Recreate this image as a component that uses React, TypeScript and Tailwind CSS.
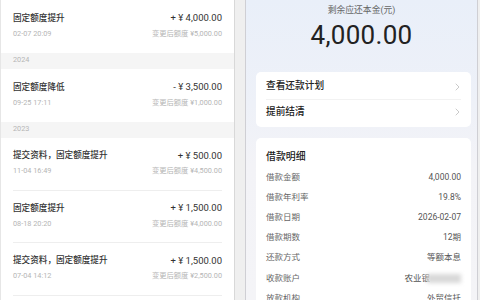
import React from "react";

const FONT = { fontFamily: "Roboto, 'Noto Sans CJK SC', sans-serif" };

type Rec = { title: string; amount: string; time: string; after: string };

function Row({ r, divider }: { r: Rec; divider?: boolean }) {
  return (
    <div className="px-[12px] shrink-0">
      <div className={`h-[52.5px] flex flex-col justify-center ${divider ? "border-b border-[#eeeeee]" : ""}`}>
        <div className="flex justify-between items-center h-[16px]">
          <span className="text-[8.6px] text-[#333] font-medium">{r.title}</span>
          <span className="text-[9.5px] text-[#333]">{r.amount}</span>
        </div>
        <div className="flex justify-between items-center h-[16px]">
          <span className="text-[7.3px] text-[#b5b5b5]">{r.time}</span>
          <span className="text-[7.3px] text-[#b5b5b5]">{r.after}</span>
        </div>
      </div>
    </div>
  );
}

function Band({ year }: { year: string }) {
  return (
    <div className="h-[16.5px] shrink-0 bg-[#f5f5f5] px-[12px] flex items-center text-[7.3px] text-[#b5b5b5]">{year}</div>
  );
}

function Detail({ label, value }: { label: string; value: React.ReactNode }) {
  return (
    <div className="h-[20.2px] shrink-0 flex items-center justify-between">
      <span className="text-[8.5px] text-[#666]">{label}</span>
      <span className="text-[8.5px] text-[#555]">{value}</span>
    </div>
  );
}

function Chevron() {
  return (
    <svg width="5" height="8" viewBox="0 0 5 8" fill="none" className="mr-[1px]">
      <path d="M1 1 L4 4 L1 7" stroke="#c4c4c4" strokeWidth="0.9" strokeLinecap="round" strokeLinejoin="round" />
    </svg>
  );
}

export default function App() {
  return (
    <div style={FONT} className="w-[480px] h-[300px] overflow-hidden bg-[#efefef] flex">
      <div className="w-[235px] h-full bg-white border-l border-[#e6e6e6] border-r border-r-[#d8d8d8] flex flex-col shrink-0 overflow-hidden">
        <Row r={{ title: "固定额度提升", amount: "+ ¥ 4,000.00", time: "02-07 20:09", after: "变更后额度 ¥5,000.00" }} />
        <Band year="2024" />
        <Row r={{ title: "固定额度降低", amount: "- ¥ 3,500.00", time: "09-25 17:11", after: "变更后额度 ¥1,000.00" }} />
        <Band year="2023" />
        <Row divider r={{ title: "提交资料，固定额度提升", amount: "+ ¥ 500.00", time: "11-04 16:49", after: "变更后额度 ¥4,500.00" }} />
        <Row divider r={{ title: "固定额度提升", amount: "+ ¥ 1,500.00", time: "08-18 20:20", after: "变更后额度 ¥4,000.00" }} />
        <Row divider r={{ title: "提交资料，固定额度提升", amount: "+ ¥ 1,500.00", time: "07-04 14:12", after: "变更后额度 ¥2,500.00" }} />
      </div>
      <div className="w-[10px] shrink-0" />
      <div className="w-[233px] h-full shrink-0 overflow-hidden border-l border-r border-[#cfcfd4] bg-[linear-gradient(180deg,#e9eff9_0%,#eef1f8_35%,#f3f3f7_55%,#f4f4f7_100%)] flex flex-col">
        <div className="h-[72px] shrink-0 flex flex-col items-center">
          <div className="mt-[4px] text-[8.8px] text-[#666] h-[12px] leading-[12px]">剩余应还本金(元)</div>
          <div className="mt-[4px] text-[26px] leading-[30px] text-[#222] tracking-[0.3px]">4,000.00</div>
        </div>
        <div className="ml-[10px] shrink-0 w-[215px] bg-white rounded-[5px] py-[2.5px] px-[10px]">
          <div className="h-[25px] flex items-center justify-between border-b border-[#f2f2f2]">
            <span className="text-[9.7px] text-[#222] font-medium">查看还款计划</span>
            <Chevron />
          </div>
          <div className="h-[25px] flex items-center justify-between">
            <span className="text-[9.7px] text-[#222] font-medium">提前结清</span>
            <Chevron />
          </div>
        </div>
        <div className="ml-[10px] shrink-0 mt-[11px] w-[215px] bg-white rounded-[5px] px-[10px] pt-[10px] pb-[10px]">
          <div className="h-[18px] flex items-center text-[9.9px] text-[#222] font-medium">借款明细</div>
          <div className="mt-[1px]">
            <Detail label="借款金额" value="4,000.00" />
            <Detail label="借款年利率" value="19.8%" />
            <Detail label="借款日期" value="2026-02-07" />
            <Detail label="借款期数" value="12期" />
            <Detail label="还款方式" value="等额本息" />
            <Detail
              label="收款账户"
              value={
                <span className="flex items-center">
                  <span>农业银</span>
                  <span className="inline-block w-[34px] h-[9px] bg-[#d8d8d8] blur-[2px] -ml-[3px]" />
                </span>
              }
            />
            <Detail label="放款机构" value="外贸信托" />
          </div>
        </div>
      </div>
    </div>
  );
}
